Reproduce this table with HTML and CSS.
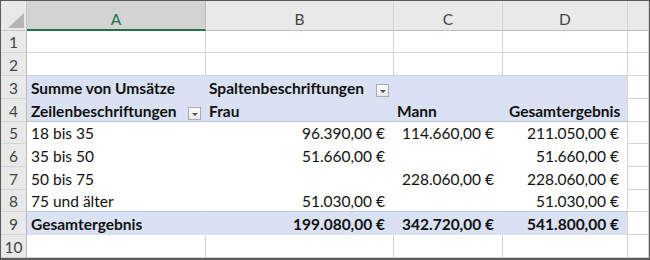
FILE: index.html
```html
<!DOCTYPE html>
<html lang="de">

<head>
    <meta charset="UTF-8">
    <title>Pivot Umsätze</title>
    <link rel="stylesheet" href="styles.css">
</head>

<body>
    <div class="sheet">
        <!-- column headers -->
        <div class="corner"><span class="corner-tri"></span></div>
        <div class="col-hd sel">A</div>
        <div class="col-hd">B</div>
        <div class="col-hd">C</div>
        <div class="col-hd">D</div>
        <div class="col-hd"></div>

        <!-- 1 -->
        <div class="row-hd">1</div>
        <div class="cell"></div>
        <div class="cell"></div>
        <div class="cell"></div>
        <div class="cell"></div>
        <div class="cell"></div>

        <!-- 2 -->
        <div class="row-hd">2</div>
        <div class="cell"></div>
        <div class="cell"></div>
        <div class="cell"></div>
        <div class="cell"></div>
        <div class="cell"></div>

        <!-- 3 -->
        <div class="row-hd">3</div>
        <div class="cell pv head first b">Summe von Umsätze</div>
        <div class="cell pv head b">Spaltenbeschriftungen <span class="dd"></span></div>
        <div class="cell pv head"></div>
        <div class="cell pv head last"></div>
        <div class="cell"></div>

        <!-- 4 -->
        <div class="row-hd">4</div>
        <div class="cell pv head labels first b">Zeilenbeschriftungen <span class="dd"></span></div>
        <div class="cell pv head labels b">Frau</div>
        <div class="cell pv head labels b">Mann</div>
        <div class="cell pv head labels last b total-hd">Gesamtergebnis</div>
        <div class="cell"></div>

        <!-- 5 -->
        <div class="row-hd">5</div>
        <div class="cell pv first">18 bis 35</div>
        <div class="cell pv num">96.390,00 €</div>
        <div class="cell pv num">114.660,00 €</div>
        <div class="cell pv num last">211.050,00 €</div>
        <div class="cell"></div>

        <!-- 6 -->
        <div class="row-hd">6</div>
        <div class="cell pv first">35 bis 50</div>
        <div class="cell pv num">51.660,00 €</div>
        <div class="cell pv num"></div>
        <div class="cell pv num last">51.660,00 €</div>
        <div class="cell"></div>

        <!-- 7 -->
        <div class="row-hd">7</div>
        <div class="cell pv first">50 bis 75</div>
        <div class="cell pv num"></div>
        <div class="cell pv num">228.060,00 €</div>
        <div class="cell pv num last">228.060,00 €</div>
        <div class="cell"></div>

        <!-- 8 -->
        <div class="row-hd">8</div>
        <div class="cell pv first">75 und älter</div>
        <div class="cell pv num">51.030,00 €</div>
        <div class="cell pv num"></div>
        <div class="cell pv num last">51.030,00 €</div>
        <div class="cell"></div>

        <!-- 9 -->
        <div class="row-hd">9</div>
        <div class="cell pv sum first b">Gesamtergebnis</div>
        <div class="cell pv sum num b">199.080,00 €</div>
        <div class="cell pv sum num b">342.720,00 €</div>
        <div class="cell pv sum num last b">541.800,00 €</div>
        <div class="cell"></div>

        <!-- 10 -->
        <div class="row-hd">10</div>
        <div class="cell"></div>
        <div class="cell"></div>
        <div class="cell"></div>
        <div class="cell"></div>
        <div class="cell"></div>
    </div>
</body>

</html>
```

FILE: styles.css
```css
body {
    margin: 0;
    background-color: #fff;
}

.sheet {
    width: 650px;
    height: 260px;
    box-sizing: border-box;
    border: 1px solid #5a5a5a;
    border-bottom-width: 2px;
    display: grid;
    grid-template-columns: 26px 179px 188px 109px 125px 1fr;
    grid-template-rows: 30px 22px 23px 23px 23px 22px 23px 23px 22px 23px 23px;
    font-family: Lato, 'Liberation Sans', sans-serif;
    font-size: 15.5px;
    line-height: 18px;
    color: #111;
    overflow: hidden;
}

/* headers */

.corner,
.col-hd,
.row-hd {
    background-color: #e9e9e9;
    color: #444;
    box-sizing: border-box;
}

.corner {
    position: relative;
    border-right: 1px solid #c6c6c6;
    border-bottom: 1px solid #c6c6c6;
}

.corner-tri {
    position: absolute;
    right: 2px;
    bottom: 2px;
    width: 0;
    height: 0;
    border-left: 16px solid transparent;
    border-bottom: 15px solid #b5b5b5;
}

.col-hd {
    display: flex;
    justify-content: center;
    align-items: center;
    padding-top: 7px;
    border-right: 1px solid #d4d4d4;
    border-bottom: 1px solid #bdbdbd;
}

.col-hd.sel {
    background-color: #d3d3d3;
    color: #217346;
    border-bottom: 2px solid #217346;
    border-right-color: #bdbdbd;
}

.row-hd {
    display: flex;
    justify-content: center;
    align-items: flex-end;
    padding-bottom: 1px;
    border-right: 1px solid #bdbdbd;
    border-bottom: 1px solid #d4d4d4;
}

/* cells */

.cell {
    box-sizing: border-box;
    display: flex;
    align-items: flex-end;
    padding: 0 3px 1px 3px;
    border-right: 1px solid #d4d4d4;
    border-bottom: 1px solid #d4d4d4;
    white-space: nowrap;
}

.pv {
    border-right-color: transparent;
    border-bottom-color: transparent;
}

.pv.first {
    padding-left: 4px;
}

.pv.last {
    border-right-color: #d4d4d4;
}

.pv.head {
    background-color: #d9e1f2;
}

.pv.head.labels {
    border-bottom-color: #b4c6e7;
}

.pv.sum {
    background-color: #d9e1f2;
    border-top: 1px solid #b4c6e7;
    margin-top: -1px;
}

.total-hd {
    padding-left: 6px;
}

.num {
    justify-content: flex-end;
    padding-right: 8px;
}

.b {
    font-weight: bold;
}

/* pivot filter button */

.dd {
    position: relative;
    margin-left: auto;
    margin-right: 1px;
    margin-bottom: 0;
    width: 13px;
    height: 13px;
    box-sizing: border-box;
    border: 1px solid #ababab;
    background: linear-gradient(#fdfdfd, #e8e8e8);
}

.dd::after {
    content: '';
    position: absolute;
    left: 3px;
    top: 5px;
    border-left: 3px solid transparent;
    border-right: 3px solid transparent;
    border-top: 3px solid #505050;
}
```
